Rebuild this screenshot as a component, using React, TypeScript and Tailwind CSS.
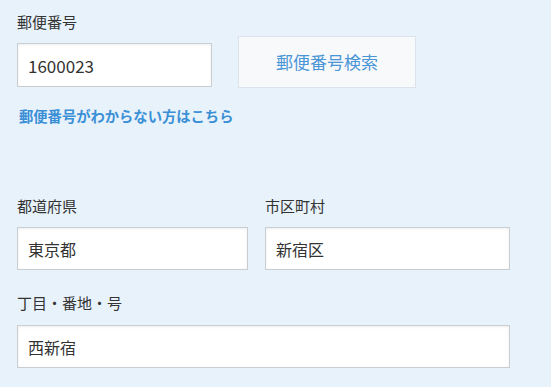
const font = { fontFamily: '"Noto Sans CJK JP", "Noto Sans", sans-serif' }

function Field({ value, className }: { value: string; className: string }) {
  return (
    <input
      readOnly
      defaultValue={value}
      className={`border border-[#c9ced2] bg-white px-[10px] text-[#333] shadow-[inset_0_1px_3px_rgba(0,0,0,0.07)] outline-none ${className}`}
      style={font}
    />
  )
}

export default function App() {
  return (
    <div className="min-h-[387px] w-[551px] bg-[#e8f2fb] px-[17px] pt-[12px] text-[#333]" style={font}>
      <div className="flex items-start">
        <div className="flex flex-col">
          <label className="text-[15px] leading-[20px]">郵便番号</label>
          <Field value="1600023" className="mt-[11px] h-[44px] w-[195px] text-[17px]" />
        </div>
        <button className="ml-[26px] mt-[24px] h-[52px] w-[178px] border border-[#dde3ea] bg-[#f7f9fb] text-[17px] text-[#4a95d6]">
          郵便番号検索
        </button>
      </div>
      <p className="mt-[18px] pl-[2px] text-[14.3px] font-bold leading-[20px] text-[#3a8fd6]">
        郵便番号がわからない方はこちら
      </p>

      <div className="mt-[70px] flex gap-[17px]">
        <div className="flex flex-col">
          <label className="text-[15px] leading-[20px]">都道府県</label>
          <Field value="東京都" className="mt-[11px] h-[43px] w-[231px] text-[16px]" />
        </div>
        <div className="flex flex-col">
          <label className="text-[15px] leading-[20px]">市区町村</label>
          <Field value="新宿区" className="mt-[11px] h-[43px] w-[245px] text-[16px]" />
        </div>
      </div>

      <div className="mt-[23px] flex flex-col">
        <label className="text-[15px] leading-[20px]">丁目・番地・号</label>
        <Field value="西新宿" className="mt-[12px] h-[43px] w-[493px] text-[16px]" />
      </div>
    </div>
  )
}
